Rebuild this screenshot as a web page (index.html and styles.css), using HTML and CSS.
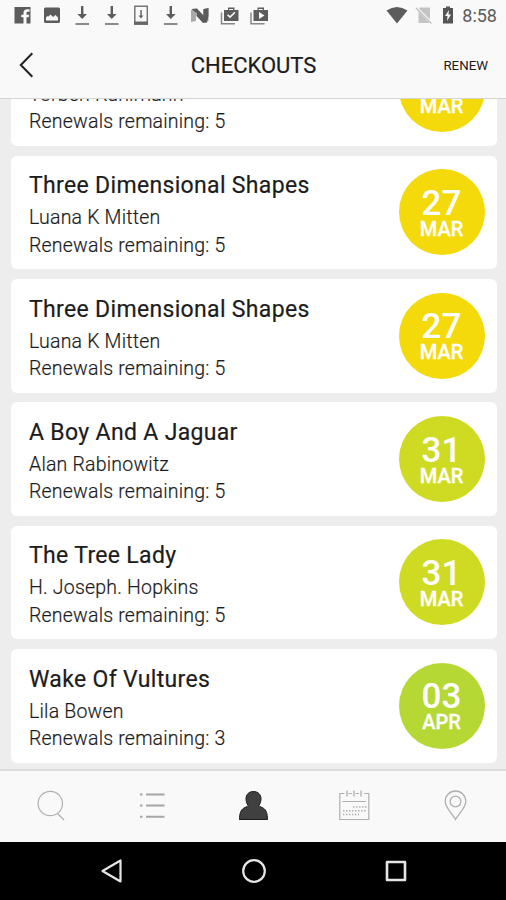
FILE: index.html
```html
<!DOCTYPE html>
<html lang="en">
<head>
    <meta charset="UTF-8">
    <meta name="viewport" content="width=device-width, initial-scale=1.0">
    <title>Checkouts</title>
    <link rel="stylesheet" href="styles.css">
</head>
<body>
    <div class="status-bar">
        <svg class="status-icons" width="260" height="32" viewBox="0 0 260 32">
            <!-- facebook -->
            <path fill="#5c5c5c" fill-rule="evenodd" d="M2.500 7h16v16.500h-16zM11.500 23.500h3v-6.200h2.200l.5-2.600h-2.700v-1.700c0-.9.400-1.300 1.400-1.300h1.600V9.200h-2.200c-2.400 0-3.800 1.300-3.800 3.500v2H9.300v2.600h2.200z"/>
            <!-- picture -->
            <path fill="#5c5c5c" fill-rule="evenodd" d="M33.500 7.500h13q1.500 0 1.500 1.500v12.500q0 1.500-1.500 1.500h-13q-1.500 0-1.500-1.500V9q0-1.500 1.500-1.500zM34 20.500h12v-3l-2.500-2.500-2.500 2-2.500-2.500-2 2-1-.5-1.500 1.500z"/>
            <!-- downloads -->
            <g fill="#5c5c5c">
                <path d="M69 6h2.400v8h3.600l-4.800 5-4.800-5H69z"/>
                <path d="M98.600 6h2.400v8h3.600l-4.800 5-4.800-5h3.600z"/>
                <path d="M157.600 6h2.400v8h3.600l-4.800 5-4.800-5h3.600z"/>
            </g>
            <path stroke="#8a8a8a" stroke-width="1.800" d="M63.500 24h13.500M93 24h13.500M152 24h13.500"/>
            <path fill="none" stroke="#777" stroke-width="1.500" d="M122.800 6.300h12.500V24h-12.500z"/>
            <path fill="#666" d="M122 21.500h14v3.300h-14zM128.300 10h1.500v5.500h1.700l-2.500 3-2.500-3h1.800z"/>
            <!-- N -->
            <path fill="#aaa" d="M179 10l5-1.500v12.500l-5 1zM191 9.500l5.500-1.500v13l-5.500 1z"/>
            <path fill="#5c5c5c" d="M179.500 9l5.500-.5 6.500 7V9l5-1v8l-1.500 6.500-4 .5-6.500-7v-3z"/>
            <!-- play store bags -->
            <g fill="#5c5c5c" fill-rule="evenodd">
                <path d="M212 10h4V7.500h6.500V10h4v11H212zM217.200 10h4V9h-4zM215 15.300l3 3 5.500-5.500-1.100-1.100-4.400 4.400-1.900-1.900z"/>
                <path d="M241.500 10h4V7.500h6.500V10h4v11h-14.500zM246.700 10h4V9h-4zM247 12v7l5.500-3.500z"/>
            </g>
            <path fill="none" stroke="#888" stroke-width="1.500" d="M209.500 12.500v11.200h13.500M239 12.500v11.200h13.500"/>
        </svg>
        <div class="status-right">
            <svg width="72" height="32" viewBox="0 0 72 32">
                <path fill="#5c5c5c" d="M1.500 10.500Q12 3.500 22.500 10.500L12 23.500z"/>
                <path fill="#c4c4c4" d="M34.500 7.500H45v12L34 8.500zM33.500 11.500L44.500 23h-11z"/>
                <path stroke="#c4c4c4" stroke-width="1.500" d="M31 8L46.500 23.500"/>
                <path fill="#555" fill-rule="evenodd" d="M58 8h3V6.500h4V8h3v15.500h-10zM64 10l-4 6h2.500l-.5 5 4-6.500h-2.500z"/>
            </svg>
            <span class="clock">8:58</span>
        </div>
    </div>

    <header class="header">
        <svg class="back" width="15" height="26" viewBox="0 0 15 26">
            <path fill="none" stroke="#222" stroke-width="2" d="M13.300 1.300L1.800 13l11.500 11.700"/>
        </svg>
        <h1 class="header-title">CHECKOUTS</h1>
        <span class="renew">RENEW</span>
    </header>

    <main class="list">
        <!-- scrolled partly under the header -->
        <article class="card">
            <div class="card-text">
                <p class="author">Torben Kuhlmann</p>
                <p class="renewals">Renewals remaining: 5</p>
            </div>
            <div class="due yellow"><span class="month">MAR</span></div>
        </article>
        <article class="card">
            <div class="card-text">
                <h2 class="book">Three Dimensional Shapes</h2>
                <p class="author">Luana K Mitten</p>
                <p class="renewals">Renewals remaining: 5</p>
            </div>
            <div class="due yellow"><span class="day">27</span><span class="month">MAR</span></div>
        </article>
        <article class="card">
            <div class="card-text">
                <h2 class="book">Three Dimensional Shapes</h2>
                <p class="author">Luana K Mitten</p>
                <p class="renewals">Renewals remaining: 5</p>
            </div>
            <div class="due yellow"><span class="day">27</span><span class="month">MAR</span></div>
        </article>
        <article class="card">
            <div class="card-text">
                <h2 class="book">A Boy And A Jaguar</h2>
                <p class="author">Alan Rabinowitz</p>
                <p class="renewals">Renewals remaining: 5</p>
            </div>
            <div class="due lime"><span class="day">31</span><span class="month">MAR</span></div>
        </article>
        <article class="card">
            <div class="card-text">
                <h2 class="book">The Tree Lady</h2>
                <p class="author">H. Joseph. Hopkins</p>
                <p class="renewals">Renewals remaining: 5</p>
            </div>
            <div class="due lime"><span class="day">31</span><span class="month">MAR</span></div>
        </article>
        <article class="card">
            <div class="card-text">
                <h2 class="book">Wake Of Vultures</h2>
                <p class="author">Lila Bowen</p>
                <p class="renewals">Renewals remaining: 3</p>
            </div>
            <div class="due green"><span class="day">03</span><span class="month">APR</span></div>
        </article>
    </main>

    <nav class="tabs">
        <div class="tab">
            <svg width="32" height="32" viewBox="0 0 32 32" fill="none" stroke="#b0b0b0" stroke-width="1.200">
                <circle cx="15.300" cy="13.500" r="12.200"/>
                <path d="M22.500 23.500l6.500 6.500"/>
            </svg>
        </div>
        <div class="tab">
            <svg width="32" height="32" viewBox="0 0 32 32" stroke="#a6a6a6" stroke-width="2">
                <path d="M10 4.500h18.500M10 15.500h18.500M10 26.700h18.500M4 4.500h2.500M4 15.500h2.500M4 26.700h2.500"/>
            </svg>
        </div>
        <div class="tab">
            <svg width="32" height="32" viewBox="0 0 32 32">
                <path fill="#404040" stroke="#1c1c1c" stroke-width="1" d="M16.500 1.500c4.500 0 7.500 3 7.500 7.200 0 2.800-.8 4.800-2 6.800 1 1.500 2.500 1.500 4.500 2.800 2.500 1.700 4 5 4 11.200h-28c0-6.200 1.500-9.500 4-11.200 2-1.300 3.500-1.300 4.500-2.800-1.200-2-2-4-2-6.800 0-4.200 3-7.200 7.500-7.200z"/>
            </svg>
        </div>
        <div class="tab">
            <svg width="32" height="32" viewBox="0 0 32 32" fill="none" stroke="#b0b0b0" stroke-width="1.200">
                <path d="M6.500 3.500H1.800v26h29v-26h-4.500M10.500 3.500h3.500M17.500 3.500h3.500M4.500 11.500h23.500"/>
                <path d="M9 .500v6M16 .500v6M23 .500v6" stroke-width="1.300"/>
                <path d="M15 17h13.500M5 20.700h23.500M5 24.500h16" stroke-width="1.500" stroke-dasharray="1.500 1.500"/>
            </svg>
        </div>
        <div class="tab">
            <svg width="32" height="32" viewBox="0 0 32 32" fill="none" stroke="#b0b0b0" stroke-width="1.300">
                <path d="M16.500 29.500c-3-5.500-10.300-11.800-10.300-18C6.200 5.400 10.800 1 16.500 1s10.300 4.400 10.300 10.500c0 6.200-7.300 12.500-10.300 18z"/>
                <circle cx="16.500" cy="11.500" r="5.400"/>
            </svg>
        </div>
    </nav>

    <footer class="android-nav">
        <svg width="26" height="26" viewBox="0 0 26 26" fill="none" stroke="#e6e6e6" stroke-width="2.200">
            <path stroke-linejoin="round" d="M21.500 2.500v21L3.500 13z"/>
        </svg>
        <svg width="26" height="26" viewBox="0 0 26 26" fill="none" stroke="#e6e6e6" stroke-width="2.200">
            <circle cx="13" cy="13" r="10.800"/>
        </svg>
        <svg width="26" height="26" viewBox="0 0 26 26" fill="none" stroke="#e6e6e6" stroke-width="2.600">
            <path stroke-linejoin="round" d="M4 4h18v18H4z"/>
        </svg>
    </footer>
</body>
</html>
```
FILE: styles.css
```css
* {
    margin: 0;
    padding: 0;
    box-sizing: border-box;
}
body {
    display: flex;
    flex-direction: column;
    height: 900px;
    overflow: hidden;
    background-color: #ededed;
    font-family: Roboto, "Liberation Sans", sans-serif;
    color: #1c1c1c;
}
svg {
    display: block;
}
.status-bar {
    display: flex;
    justify-content: space-between;
    flex: none;
    height: 32px;
    padding: 0 9px 0 12px;
    background-color: #f9f9f9;
}
.status-right {
    display: flex;
    align-items: center;
    gap: 5px;
}
.clock {
    font-size: 18px;
    line-height: 30px;
    padding-bottom: 1px;
    color: #5c5c5c;
}
.header {
    display: grid;
    grid-template-columns: 100px 1fr 100px;
    align-items: center;
    flex: none;
    height: 67px;
    padding: 0 18px 0 19px;
    background-color: #f9f9f9;
    border-bottom: 1px solid #d4d4d4;
}
.header-title {
    font-size: 22px;
    font-weight: 400;
    text-align: center;
    -webkit-text-stroke: 0.2px #1c1c1c;
}
.renew {
    font-size: 13.3px;
    text-align: right;
}
.list {
    display: flex;
    flex-direction: column;
    justify-content: flex-end;
    gap: 9.7px;
    flex: 1;
    min-height: 0;
    overflow: hidden;
    padding: 0 9.5px 6.5px 10.5px;
}
.card {
    display: flex;
    justify-content: space-between;
    align-items: center;
    flex: none;
    height: 113.65px;
    padding: 0 12px 0 18.5px;
    background-color: #fff;
    border-radius: 6px;
}
.card-text {
    align-self: flex-end;
    padding-bottom: 10.3px;
}
.book {
    margin-bottom: 2px;
    font-size: 23px;
    font-weight: 400;
    line-height: 32px;
    letter-spacing: 0.33px;
    -webkit-text-stroke: 0.2px #1c1c1c;
}
.author,
.renewals {
    font-size: 19.5px;
    font-weight: 300;
    line-height: 27.3px;
    letter-spacing: 0.2px;
    -webkit-text-stroke: 0.2px #1c1c1c;
}
.due {
    display: flex;
    flex-direction: column;
    align-items: center;
    justify-content: flex-end;
    width: 86px;
    height: 86px;
    padding-bottom: 16.5px;
    border-radius: 50%;
    color: #fff;
    font-weight: 500;
}
.yellow {
    background-color: #f4d90b;
}
.lime {
    background-color: #cfdb22;
}
.green {
    background-color: #b6d834;
}
.day {
    font-size: 35px;
    line-height: 30px;
}
.month {
    font-size: 20px;
    line-height: 20px;
    -webkit-text-stroke: 0.3px #fff;
}
.tabs {
    display: flex;
    flex: none;
    height: 73px;
    padding-top: 19px;
    background-color: #f9f9f9;
    border-top: 2px solid #dcdcdc;
}
.tab {
    display: flex;
    justify-content: center;
    flex: 1;
}
.android-nav {
    display: flex;
    justify-content: center;
    gap: 116px;
    flex: none;
    height: 58px;
    padding: 16px 0 0 1px;
    background-color: #000;
}
```
